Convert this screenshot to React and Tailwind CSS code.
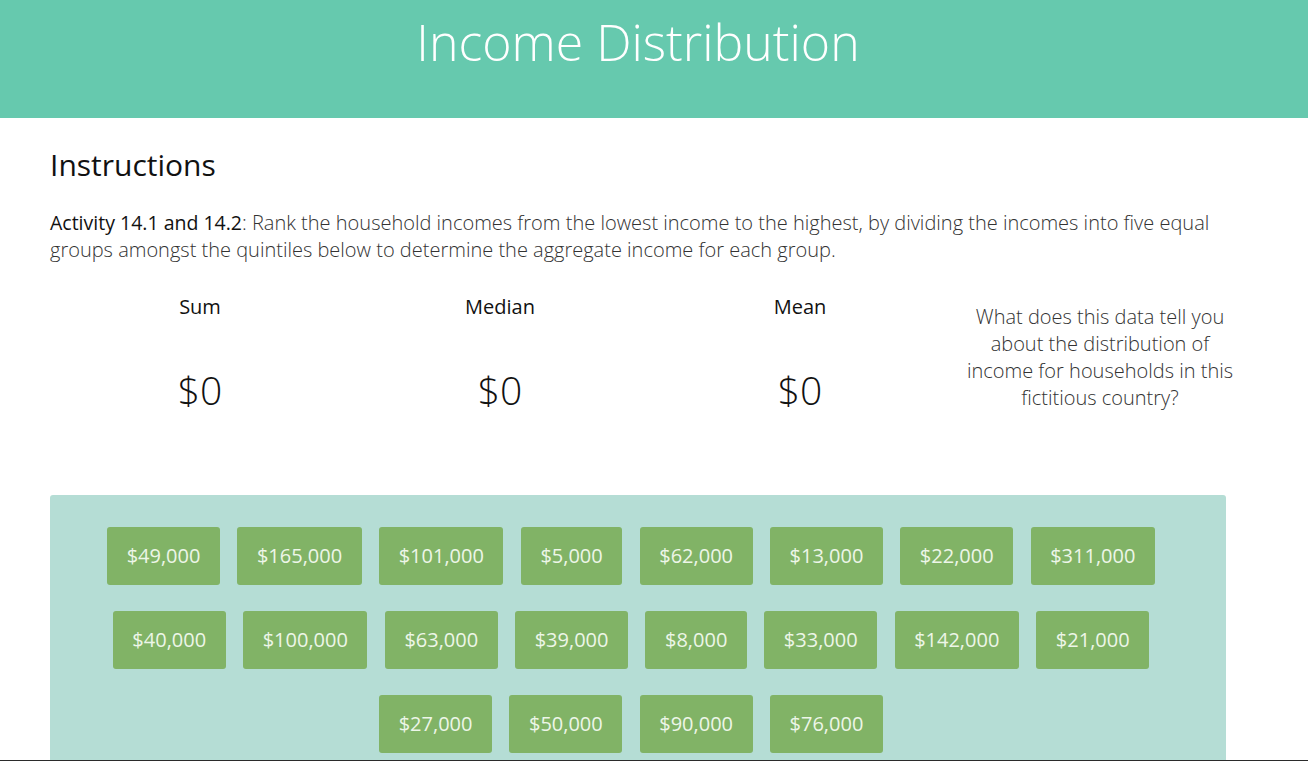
import React from "react";

const incomes = [
  "$49,000", "$165,000", "$101,000", "$5,000", "$62,000", "$13,000", "$22,000", "$311,000",
  "$40,000", "$100,000", "$63,000", "$39,000", "$8,000", "$33,000", "$142,000", "$21,000",
  "$27,000", "$50,000", "$90,000", "$76,000",
];

const Stat = ({ label }) => (
  <div className="w-[300px] flex flex-col items-center">
    <div className="text-[20px] leading-[27px] text-[#111]">{label}</div>
    <div className="text-[39px] font-light leading-none text-[#111] mt-[50px]">$0</div>
  </div>
);

const App = () => {
  return (
    <div className="min-h-screen bg-white font-['Open_Sans',sans-serif]">
      {/* Header */}
      <div className="h-[118px] bg-[#66C9AE]">
        <div className="w-[1176px] ml-[50px] pt-[10px] text-center">
          <h1 className="text-[50px] font-light text-white leading-[64px]">Income Distribution</h1>
        </div>
      </div>

      <div className="w-[1200px] ml-[50px]">
        <h2 className="text-[30px] text-[#111] leading-[40px] mt-[27px]">Instructions</h2>
        <p className="text-[20px] leading-[27px] font-light text-[#333] mt-[24px] w-[1180px]">
          <span className="font-normal text-[19.5px] text-[#111]">Activity 14.1 and 14.2</span>: Rank the household incomes from the lowest income to the highest, by dividing the incomes into five equal groups amongst the quintiles below to determine the aggregate income for each group.
        </p>

        {/* Stats */}
        <div className="flex mt-[30px]">
          <Stat label="Sum" />
          <Stat label="Median" />
          <Stat label="Mean" />
          <div className="w-[300px] flex justify-center pt-[10px]">
            <p className="w-[275px] text-center text-[20px] leading-[27px] font-light text-[#333]">
              What does this data tell you about the distribution of income for households in this fictitious country?
            </p>
          </div>
        </div>
      </div>

      {/* Incomes panel */}
      <div className="w-[1176px] ml-[50px] mt-[84px] bg-[#B5DDD5] rounded-t-[3px] pt-[32px] pb-[26px] pl-[40px] pr-[54px]">
        <div className="flex flex-wrap justify-center gap-x-[17.5px] gap-y-[26px]">
          {incomes.map((v) => (
            <div
              key={v}
              className="h-[58px] px-[19.5px] flex items-center rounded-[3px] bg-[#81B366] text-[20px] text-[#EDF6E8]"
            >
              {v}
            </div>
          ))}
        </div>
      </div>

      <div className="fixed bottom-0 left-0 w-full h-px bg-[#2b2b2b]"></div>
    </div>
  );
};

export default App;
